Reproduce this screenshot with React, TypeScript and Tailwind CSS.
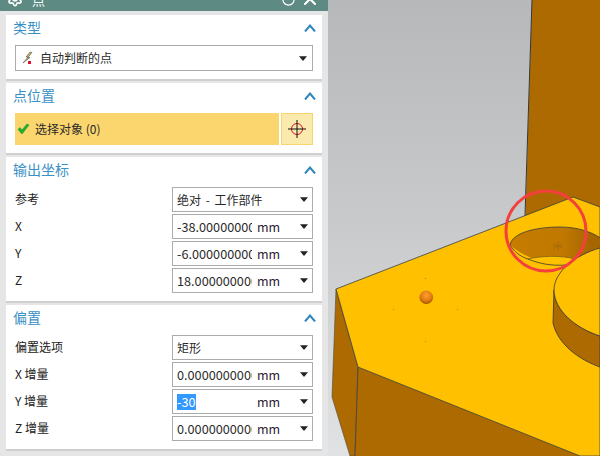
import React from "react";
import { Settings, X, RotateCw } from "lucide-react";

const font = "font-['Noto_Sans_CJK_SC','Noto_Sans',sans-serif]";

const Arrow = () => (
  <svg width="8" height="5" viewBox="0 0 8 5" className="shrink-0">
    <path d="M0 0.2 H8 L4 5 Z" fill="#222" />
  </svg>
);

const Chevron = () => (
  <svg width="12" height="8" viewBox="0 0 12 8" className="shrink-0 mt-[1px]">
    <path d="M1 7.5 L6 1.5 L11 7.5" fill="none" stroke="#2f86bd" strokeWidth="2" />
  </svg>
);

const Section = ({ title, className, children }: { title: string; className: string; children: React.ReactNode }) => {
  return (
    <div className={`bg-white border-b-2 border-[#cfcfcf] flex flex-col ${className}`}>
      <div className="h-[24px] pl-[7px] pr-[6px] flex items-center justify-between">
        <span className="text-[14px] leading-none text-[#3a90c6]">{title}</span>
        <Chevron />
      </div>
      {children}
    </div>
  );
};

const Field = ({ value, unit, selected }: { value: string; unit?: string; selected?: boolean }) => {
  return (
    <div className="w-[141px] h-[25px] border border-[#ababab] bg-white flex items-center pl-[4px] pr-[4px]">
      <div className="w-[75px] overflow-hidden whitespace-nowrap text-[12.7px] leading-[16px] text-[#2b2b2b] shrink-0">
        {selected ? <span className="bg-[#3399ff] text-white inline-block">{value}</span> : value}
      </div>
      <span className="ml-[5px] mt-[1px] text-[12.5px] leading-none text-[#2a2030]">{unit}</span>
      <span className="ml-auto">
        <Arrow />
      </span>
    </div>
  );
};

const Row = ({ label, children }: { label: string; children: React.ReactNode }) => {
  return (
    <div className="flex items-center justify-between h-[25px]">
      <span className="pb-[2px] text-[12px] leading-none text-[#222]">{label}</span>
      {children}
    </div>
  );
};

const Viewport = () => (
  <svg viewBox="328 0 272 456" width="272" height="456" className="block">
    <defs>
      <linearGradient id="bg" x1="0" y1="0" x2="0" y2="1">
        <stop offset="0" stopColor="#b6b8ba" />
        <stop offset="0.5" stopColor="#c8cacc" />
        <stop offset="1" stopColor="#e0e2e3" />
      </linearGradient>
      <linearGradient id="hole" x1="0" y1="0" x2="1" y2="0">
        <stop offset="0" stopColor="#c67c00" />
        <stop offset="0.55" stopColor="#c07800" />
        <stop offset="0.85" stopColor="#a66500" />
      </linearGradient>
      <radialGradient id="ball" cx="0.5" cy="0.35" r="0.7">
        <stop offset="0" stopColor="#ffa030" />
        <stop offset="0.6" stopColor="#e07a10" />
        <stop offset="1" stopColor="#8a4a00" />
      </radialGradient>
    </defs>
    <rect x="328" y="0" width="272" height="456" fill="url(#bg)" />
    {/* column */}
    <path d="M532 0 H600 V230 H525 Z" fill="#ad6a00" />
    <path d="M532 0 L525 216" stroke="#33383d" strokeWidth="1" fill="none" />
    {/* left and front faces */}
    <path d="M336 289 L358 367 L355 456 H350 L332 397 Z" fill="#ad6a00" stroke="#4a4a40" strokeWidth="0.6" />
    <path d="M358 367 L600 462 V456 H355 Z" fill="#ad6a00" />
    <path d="M358 367 L355 456" stroke="#4a4a40" strokeWidth="1" fill="none" />
    {/* top plate */}
    <path d="M336 289 L573 197 L600 207 V456 H580 L358 367 Z" fill="#ffc000" stroke="#3a4048" strokeWidth="0.8" />
    {/* hole */}
    <path
      d="M510 245 C512 233 535 227 560 227 C578 227 594 232 606 242 L600 268 L570 265 C555 266 530 262 510 245 Z"
      fill="url(#hole)"
    />
    <path
      d="M510 245 C512 233 535 227 560 227 C578 227 594 232 606 242"
      fill="none"
      stroke="#3a3a38"
      strokeWidth="0.8"
    />
    <path d="M510 245 C516 254 522 257 528 259" fill="none" stroke="#3a3a38" strokeWidth="0.8" />
    <path d="M528 259 C540 256 560 255 575 259 L566 265 C552 266 538 264 528 259 Z" fill="#ffc000" />
    <path d="M528 259 C540 256 560 255 575 259" fill="none" stroke="#5a4a20" strokeWidth="0.6" />
    <path d="M528 259 C540 264 552 266 566 265" fill="none" stroke="#3a3a38" strokeWidth="0.8" />
    {/* boss */}
    <path d="M554 290 L553 323 C558 345 580 360 600 367 V336 C575 328 554 310 554 290 Z" fill="#ad6a00" stroke="#33383d" strokeWidth="0.8" />
    <path d="M554 290 C554 272 575 255 600 248 V336 C575 328 554 310 554 290 Z" fill="#ffc000" stroke="#33383d" strokeWidth="0.8" />
    {/* star */}
    <path d="M558 241 V251 M553.5 243.5 L562.5 248.5 M553.5 248.5 L562.5 243.5 M553 246 H563" stroke="#8a5a20" strokeWidth="0.6" opacity="0.6" />
    {/* point handles */}
    <rect x="425" y="278" width="1" height="1" fill="#a08a40" />
    <rect x="393" y="309" width="1" height="1" fill="#a08a40" />
    <rect x="457" y="309" width="1" height="1" fill="#a08a40" />
    <rect x="425" y="341" width="1" height="1" fill="#a08a40" />
    <circle cx="426.3" cy="297.3" r="6.8" fill="url(#ball)" />
    {/* red mark */}
    <circle cx="546" cy="231" r="40" fill="none" stroke="#f4403c" strokeWidth="3" />
  </svg>
);

export default function App() {
  return (
    <div className={`w-[600px] h-[456px] flex overflow-hidden ${font}`}>
      <div className="w-[328px] h-full bg-[#e6e6e6] flex flex-col shrink-0">
        <div className="h-[11px] bg-[#5d8a82] overflow-hidden flex items-end pl-[7px] pr-[8px] shrink-0">
          <div className="h-[22px] flex items-center w-full -translate-y-[1px]">
            <Settings size={16} color="#fff" strokeWidth={2.5} />
            <span className="ml-[9px] text-[13px] leading-none text-white">点</span>
            <RotateCw size={15} color="#fff" strokeWidth={2} className="ml-auto" />
            <X size={20} color="#fff" strokeWidth={2.5} className="ml-[4px]" />
          </div>
        </div>

        <div className="flex flex-col gap-[2px] pt-[4px] pl-[6px] pr-[6px]">
          <Section title="类型" className="h-[66px]">
            <div className="mx-[9px] mt-[6px] h-[26px] border border-[#ababab] flex items-center pl-[6px] pr-[5px]">
              <svg width="12" height="14" viewBox="0 0 12 14" className="shrink-0">
                <path d="M8 1 L4 6 H6 L1 12 L8 6.5 H6 L10 1.5 Z" fill="#c9b458" stroke="#555" strokeWidth="0.6" />
                <rect x="6" y="10" width="3" height="3" fill="#e0102a" />
              </svg>
              <span className="ml-[6px] text-[12px] leading-none text-[#2a2a2a]">自动判断的点</span>
              <span className="ml-auto">
                <Arrow />
              </span>
            </div>
          </Section>

          <Section title="点位置" className="h-[72px]">
            <div className="mx-[9px] mt-[6px] h-[32px] flex gap-[2px]">
              <div className="flex-1 bg-[#fbd56e] flex items-center pl-[2px]">
                <svg width="13" height="12" viewBox="0 0 13 12" className="shrink-0">
                  <path d="M1 6.5 L5 11 L12 2 L10 1 L5 7 L3 4.5 Z" fill="#1fb02c" stroke="#0e8a1c" strokeWidth="0.5" />
                </svg>
                <span className="ml-[5px] text-[12px] leading-none text-[#2a2a2a]">选择对象 (0)</span>
              </div>
              <div className="w-[32px] bg-[#fbeaae] border border-[#f7d56e] flex items-center justify-center">
                <svg width="20" height="20" viewBox="0 0 20 20">
                  <circle cx="10" cy="10" r="5.5" fill="none" stroke="#d8102a" strokeWidth="1" />
                  <path d="M10 1 V19 M1 10 H19" stroke="#111" strokeWidth="1" />
                </svg>
              </div>
            </div>
          </Section>

          <Section title="输出坐标" className="h-[146px]">
            <div className="mx-[9px] mt-[6px] flex flex-col gap-[2px]">
              <Row label="参考">
                <div className="w-[141px] h-[25px] border border-[#ababab] flex items-center pl-[4px] pr-[4px]">
                  <span className="text-[12px] leading-none text-[#2a2a2a] whitespace-nowrap [word-spacing:2px]">绝对 - 工作部件</span>
                  <span className="ml-auto">
                    <Arrow />
                  </span>
                </div>
              </Row>
              <Row label="X">
                <Field value="-38.00000000000" unit="mm" />
              </Row>
              <Row label="Y">
                <Field value="-6.000000000000" unit="mm" />
              </Row>
              <Row label="Z">
                <Field value="18.00000000000" unit="mm" />
              </Row>
            </div>
          </Section>

          <Section title="偏置" className="h-[146px]">
            <div className="mx-[9px] mt-[6px] flex flex-col gap-[2px]">
              <Row label="偏置选项">
                <div className="w-[141px] h-[25px] border border-[#ababab] flex items-center pl-[4px] pr-[4px]">
                  <span className="text-[12px] leading-none text-[#2a2a2a]">矩形</span>
                  <span className="ml-auto">
                    <Arrow />
                  </span>
                </div>
              </Row>
              <Row label="X 增量">
                <Field value="0.0000000000000" unit="mm" />
              </Row>
              <Row label="Y 增量">
                <Field value="-30" unit="mm" selected />
              </Row>
              <Row label="Z 增量">
                <Field value="0.0000000000000" unit="mm" />
              </Row>
            </div>
          </Section>
        </div>
      </div>
      <Viewport />
    </div>
  );
}
